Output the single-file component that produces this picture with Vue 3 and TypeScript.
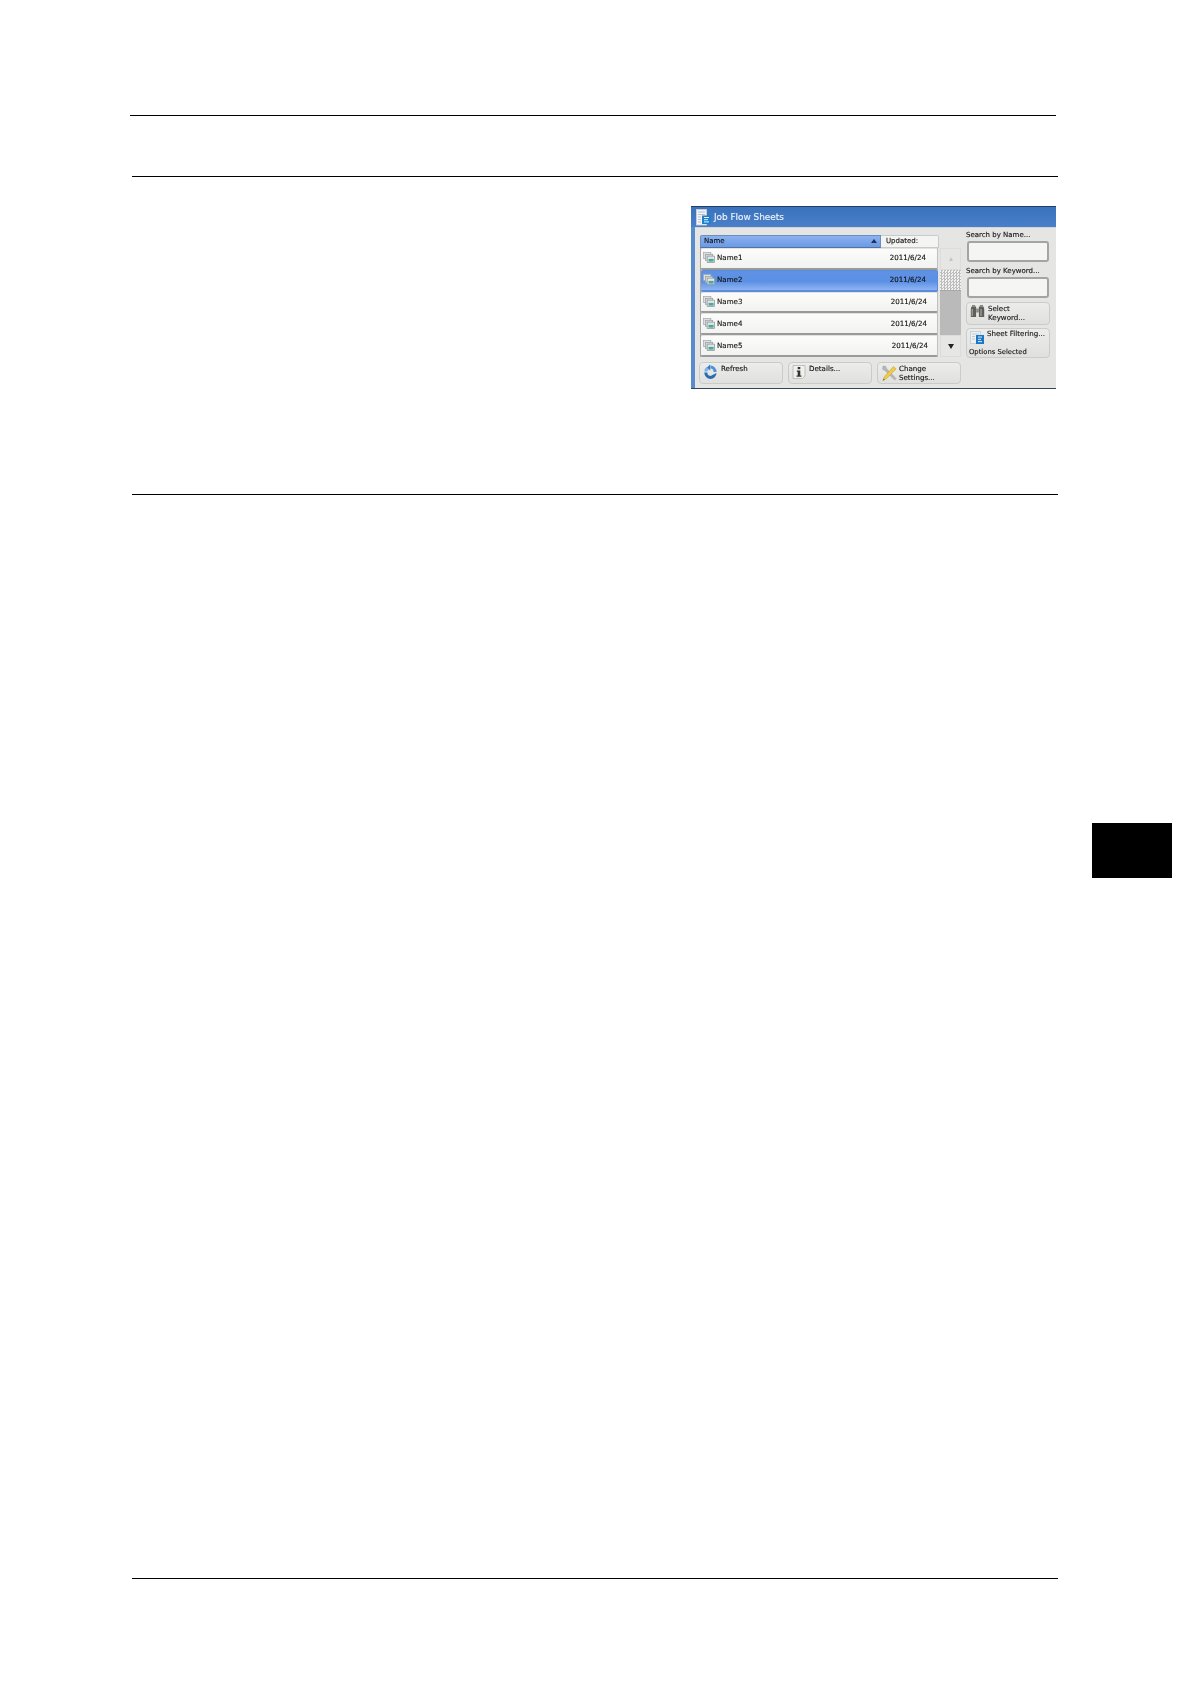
<script setup lang="ts">
interface Row { name: string; pad: number; selected: boolean }
const rows: Row[] = [
  { name: 'Name1', pad: 11, selected: false },
  { name: 'Name2', pad: 11, selected: true },
  { name: 'Name3', pad: 10, selected: false },
  { name: 'Name4', pad: 10, selected: false },
  { name: 'Name5', pad: 9, selected: false },
]
</script>

<template>
  <div class="page">
    <div class="rule rule-top"></div>
    <div class="rule rule-second"></div>

    <section class="panel">
      <header class="title">
        <svg class="title-icon" viewBox="0 0 16 17" width="16" height="17">
          <rect x="0.5" y="0.5" width="10" height="15.5" fill="#f2f4f6" stroke="#c9d3de" stroke-width="0.8" />
          <path d="M2 3h7M2 5.5h7M2 8h3M2 10.5h3M2 13h3" stroke="#a9b4c0" stroke-width="0.8" />
          <rect x="6" y="6.5" width="9" height="8.5" fill="#1f7fc8" />
          <path d="M8 8.5h5M8 10.7h4M8 12.9h5" stroke="#dff3ff" stroke-width="1" />
        </svg>
        <span>Job Flow Sheets</span>
      </header>

      <div class="body">
        <div class="left">
          <div class="heads">
            <div class="head-name"><span>Name</span><i class="sort"></i></div>
            <div class="head-date">Updated:</div>
          </div>
          <div class="list-wrap">
            <div class="rows">
              <div v-for="r in rows" :key="r.name" class="row" :class="{ sel: r.selected }">
                <svg class="doc" viewBox="0 0 13 12" width="12" height="11">
                  <rect x="0.5" y="0.5" width="8" height="6.5" fill="#e2e4e4" stroke="#a4aaac" stroke-width="0.8" />
                  <rect x="2.5" y="2.5" width="8" height="6.5" fill="#d5dadb" stroke="#979fa1" stroke-width="0.8" />
                  <rect x="4.5" y="4.5" width="8" height="7" fill="#dfe8e8" stroke="#8a9698" stroke-width="0.8" />
                  <rect x="6" y="7.5" width="5.5" height="3" fill="#4fa79a" />
                </svg>
                <span class="row-name">{{ r.name }}</span>
                <span class="row-date" :style="{ paddingRight: r.pad + 'px' }">2011/6/24</span>
              </div>
            </div>
            <div class="scroll">
              <div class="sc-btn"><i class="up"></i></div>
              <div class="thumb"></div>
              <div class="track"></div>
              <div class="sc-btn"><i class="down"></i></div>
            </div>
          </div>
          <div class="actions">
            <div class="btn">
              <svg class="ic" viewBox="0 0 15 16" width="15" height="16">
                <path d="M7.5 1.5a6.3 6.3 0 0 1 6 6.5h-3a3.2 3.2 0 0 0-3-3.4z" fill="#4f93d2" />
                <path d="M13.5 9a6.2 6.2 0 0 1-6 6 6.4 6.4 0 0 1-6.2-6.4h3.1a3.1 3.1 0 0 0 3.1 3.3z" fill="#2a6bb2" />
                <path d="M1.3 7.6a6.2 6.2 0 0 1 3-5L6 5.3a3 3 0 0 0-1.6 2.3z" fill="#7fb2e2" />
                <path d="M7.2 0.3v6.2l-3-3z" fill="#3478be" />
              </svg>
              <span class="txt">Refresh</span>
            </div>
            <div class="btn">
              <svg class="ic" viewBox="0 0 14 15" width="14" height="15">
                <path d="M1 1.5h12v10.5l-2.5 2.5H1z" fill="#f0f0ec" stroke="#b4b4ad" stroke-width="0.8" />
                <rect x="5.7" y="3" width="2.6" height="2.2" fill="#333" />
                <path d="M4.8 6.5h3.5v5h1.2v1.2H4.5v-1.2h1.2V7.7H4.8z" fill="#333" />
              </svg>
              <span class="txt">Details...</span>
            </div>
            <div class="btn change">
              <svg class="ic" viewBox="0 0 17 18" width="17" height="18">
                <path d="M2 2l2.6.4 1 2.4 9.5 9.8-1.4 1.4-9.7-9.6-2.3-1z" fill="#b4babc" stroke="#92989b" stroke-width="0.5" />
                <path d="M12.5 2.5l2.6 2.4L5.6 14.6l-3.7 2 1.6-4z" fill="#f0cb45" stroke="#bd9d30" stroke-width="0.5" />
                <path d="M1.9 16.6l.8-2 1.2 1.1z" fill="#666" />
              </svg>
              <span class="txt two">Change<br />Settings...</span>
            </div>
          </div>
        </div>

        <aside class="right">
          <label class="lbl">Search by Name...</label>
          <div class="input"></div>
          <label class="lbl second">Search by Keyword...</label>
          <div class="input"></div>
          <div class="btn select">
            <svg class="ic" viewBox="0 0 15 14" width="15" height="14">
              <path d="M1.5 2.5h4.6v10.5H.8V5z" fill="#5f5f5a" />
              <path d="M8.9 2.5h4.6l.7 2.5v8H8.9z" fill="#5f5f5a" />
              <rect x="2" y="1" width="3.2" height="2" fill="#8b8b85" />
              <rect x="9.8" y="1" width="3.2" height="2" fill="#8b8b85" />
              <rect x="6.1" y="4.5" width="2.8" height="4" fill="#8f8f89" />
              <path d="M2.2 5v7M11 5v7" stroke="#b5b5af" stroke-width="1" />
            </svg>
            <span class="txt two">Select<br />Keyword...</span>
          </div>
          <div class="filter">
            <div class="filter-top">
              <svg class="ic" viewBox="0 0 14 15" width="14" height="15">
                <rect x="0.5" y="2.5" width="10" height="12" fill="#eef1f4" stroke="#bcc5ce" stroke-width="0.7" />
                <path d="M2 5h7M2 7.5h3M2 10h3" stroke="#aeb7c0" stroke-width="0.7" />
                <rect x="6" y="6" width="8" height="9" fill="#1b78c6" />
                <path d="M8 8h4M8 10.3h3M8 12.6h4" stroke="#d8efff" stroke-width="1" />
              </svg>
              <span class="txt">Sheet Filtering...</span>
            </div>
            <span class="opts">Options Selected</span>
          </div>
        </aside>
      </div>
    </section>

    <div class="rule rule-third"></div>
    <div class="tab-row"><div class="tab"></div></div>
    <div class="rule rule-last"></div>
  </div>
</template>

<style>
html, body { margin: 0; background: #fff; }
</style>

<style scoped>
* { box-sizing: border-box; }
.page {
  width: 1190px;
  height: 1684px;
  padding-top: 115px;
  background: #fff;
  overflow: hidden;
  font-family: "DejaVu Sans", sans-serif;
  color: #111;
}
.rule { height: 1px; background: #000; width: 926px; margin-left: 132px; }
.rule-top { margin-left: 130px; }
.rule-second { margin-top: 60px; }
.rule-third { margin-top: 105px; }
.rule-last { margin-top: 700px; }
.tab-row { display: flex; justify-content: flex-end; margin-top: 328px; padding-right: 18px; }
.tab { width: 80px; height: 55px; background: #000; }

.panel {
  width: 365px;
  height: 183px;
  margin: 29px 0 0 691px;
  display: flex;
  flex-direction: column;
  background: #5a8bcc;
  border-bottom: 1px solid #33455c;
}
.title {
  height: 21px;
  display: flex;
  align-items: center;
  gap: 2px;
  padding-left: 5px;
  border-top: 1px solid #1f3f68;
  background: linear-gradient(#3a72bb, #4a80ca);
  color: #eef4fb;
  font-size: 8.9px;
  -webkit-text-stroke: 0.15px #eef4fb;
  filter: blur(0.3px);
}
.title-icon { margin-top: 1px; }
.body {
  flex: 1;
  margin-left: 4px;
  padding: 7px 6px 0 4px;
  display: flex;
  gap: 5px;
  background: #e5e6e4;
  border-top: 1px solid #d2d5d8;
  filter: blur(0.3px);
  -webkit-text-stroke: 0.12px #111;
}
.left { width: 262px; display: flex; flex-direction: column; }
.heads { display: flex; height: 13px; margin-left: 1px; width: 239px; font-size: 7px; }
.head-name {
  width: 181px;
  display: flex;
  align-items: center;
  justify-content: space-between;
  padding: 0 3px 1px 3px;
  background: linear-gradient(#8cb1ee, #6a9ae6);
  border: 1px solid #6b8dc2;
  border-bottom-color: #55719c;
  border-radius: 2px 0 0 0;
}
.sort { width: 0; height: 0; border: 3px solid transparent; border-top: 0; border-bottom: 4px solid #1d3358; }
.head-date {
  flex: 1;
  padding-left: 5px;
  line-height: 10px;
  background: #f4f4f2;
  border: 1px solid #c8cbcb;
  border-left: 0;
  border-radius: 0 2px 0 0;
}
.list-wrap { display: flex; height: 109px; gap: 2px; }
.rows {
  width: 238px;
  margin-left: 1px;
  display: grid;
  grid-template-rows: repeat(5, 1fr);
  background: #bfc0bf;
  border-left: 1px solid #a5a5a5;
}
.row {
  display: flex;
  align-items: center;
  padding: 0 0 1px 2px;
  background: linear-gradient(#fcfcfb, #f2f2f0);
  border-bottom: 2px solid #999b9a;
  border-top: 1px solid #e2e2e2;
  border-right: 1px solid #c0c0c0;
  border-radius: 2px;
  font-size: 7.1px;
}
.row.sel {
  background: linear-gradient(#5f92e5, #5c90e4 55%, #8fb4f2);
  border-color: #5a8cdc;
}
.doc { flex: none; }
.row-name { margin-left: 2px; }
.row-date { margin-left: auto; }
.scroll { width: 21px; display: flex; flex-direction: column; }
.sc-btn {
  height: 22px;
  display: flex;
  align-items: center;
  justify-content: center;
  background: #e6e7e5;
  border: 1px solid #dcdddb;
}
.up { width: 0; height: 0; border: 2.5px solid transparent; border-top: 0; border-bottom: 4px solid #c4c5c3; }
.down { width: 0; height: 0; border: 3px solid transparent; border-bottom: 0; border-top: 5px solid #222; }
.thumb {
  height: 20px;
  background-color: #e6e6e6;
  background-image: repeating-conic-gradient(#bcbcbc 0 25%, #f2f2f2 0 50%);
  background-size: 3px 3px;
}
.track { flex: 1; background: #b9bab9; border-top: 1px solid #a6a7a6; }
.actions { display: flex; gap: 5px; margin-top: 5px; height: 22px; }
.btn {
  flex: 1;
  display: flex;
  align-items: flex-start;
  padding: 1px 0 0 3px;
  gap: 3px;
  background: linear-gradient(#ececea, #e0e1df);
  border: 1px solid #cbccca;
  border-radius: 4px;
  font-size: 7.1px;
}
.change { gap: 1px; }
.txt { line-height: 9px; }
.two { line-height: 9px; }
.right { width: 84px; display: flex; flex-direction: column; margin-top: -5px; }
.lbl { height: 11px; font-size: 7px; line-height: 10px; white-space: nowrap; }
.lbl.second { height: 11px; margin-top: 4px; }
.input {
  height: 21px;
  margin: 0 1px 0 1px;
  background: #f5f5f3;
  border: 2px solid #a3a5a3;
  border-radius: 3px;
}
.select { flex: none; height: 23px; margin-top: 4px; }
.filter {
  height: 30px;
  margin-top: 3px;
  display: flex;
  flex-direction: column;
  justify-content: space-between;
  padding: 0 0 0 2px;
  background: linear-gradient(#ececea, #e0e1df);
  border: 1px solid #cbccca;
  border-radius: 4px;
  font-size: 7.1px;
}
.filter-top { display: flex; gap: 3px; align-items: flex-start; padding-left: 1px; }
.opts { font-size: 6.8px; line-height: 9px; white-space: nowrap; }
</style>
